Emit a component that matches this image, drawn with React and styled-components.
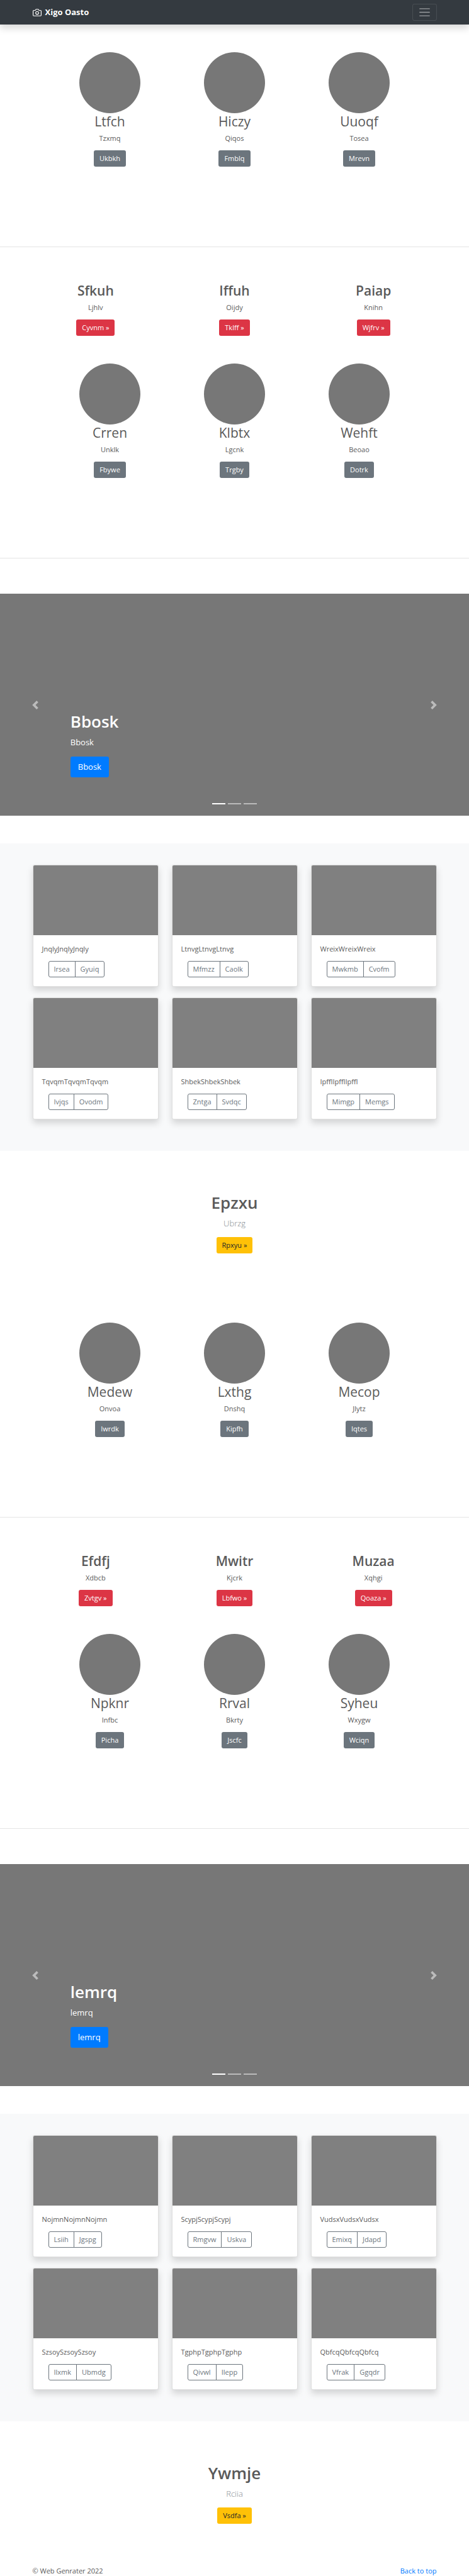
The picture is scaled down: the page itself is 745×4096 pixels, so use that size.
import React from "react";
import styled, { createGlobalStyle, css } from "styled-components";

const GlobalStyle = createGlobalStyle`
  *, *::before, *::after { box-sizing: border-box; }
  body {
    margin: 0;
    background: #fff;
    color: #5a5a5a;
    font-family: "Segoe UI", "Open Sans", "Noto Sans", sans-serif;
    font-size: 11px;
    line-height: 16px;
  }
  h1, h2, p { margin: 0; }
  button { font-family: inherit; cursor: pointer; }
`;

const Navbar = styled.header`
  position: relative;
  background: #343a40;
  box-shadow: 0 6px 11px rgba(0, 0, 0, 0.15);
`;

const Container = styled.div`
  width: 100%;
  max-width: 662px;
  margin: 0 auto;
  padding: 0 10px;
`;

const NavInner = styled(Container)`
  display: flex;
  align-items: center;
  justify-content: space-between;
  padding-top: 6px;
  padding-bottom: 6px;
`;

const Brand = styled.a`
  display: flex;
  align-items: center;
  gap: 6px;
  color: #fff;
  font-size: 13px;
  line-height: 21px;
  font-weight: 700;
  text-decoration: none;
`;

const Toggler = styled.button`
  display: flex;
  padding: 2px 8px;
  border: 1px solid rgba(255, 255, 255, 0.1);
  border-radius: 3px;
  background: transparent;
  color: rgba(255, 255, 255, 0.5);
`;

const Title = styled.h2`
  margin-bottom: 6px;
  font-size: ${(p) => (p.$large ? 26 : 21)}px;
  line-height: ${(p) => (p.$large ? 33 : 26)}px;
  font-weight: ${(p) => (p.$strong ? 600 : 400)};
`;

const Text = styled.p`
  margin-bottom: 11px;
`;

const Lead = styled.p`
  margin-bottom: ${(p) => (p.$muted ? 11 : 12)}px;
  font-size: 13px;
  line-height: 21px;
  ${(p) => p.$muted && css`
    color: #868c92;
    font-weight: 300;
  `}
`;

const tones = {
  secondary: ["#6c757d", "#fff"],
  danger: ["#dc3545", "#fff"],
  warning: ["#ffc107", "#212529"],
  primary: ["#007bff", "#fff"],
};

const Button = styled.button`
  padding: 5px 9px;
  border: 0;
  border-radius: 3px;
  background: ${(p) => tones[p.$tone][0]};
  color: ${(p) => tones[p.$tone][1]};
  font-size: 11px;
  line-height: 16px;
  ${(p) => p.$large && css`
    padding: 6px 12px;
    font-size: 13px;
    line-height: 21px;
  `}
`;

const Columns = styled.section`
  display: grid;
  grid-template-columns: repeat(3, 1fr);
  width: 100%;
  margin: 0 auto;
  text-align: center;
`;

const ProfileRow = styled(Columns)`
  max-width: 594px;
  padding: 44px 0 127px;
`;

const FeatureRow = styled(Columns)`
  max-width: 662px;
`;

const Column = styled.div`
  display: flex;
  flex-direction: column;
  align-items: center;
`;

const Avatar = styled.div`
  width: 97px;
  height: 97px;
  border-radius: 50%;
  background: #777;
`;

const Divider = styled.hr`
  height: 1px;
  margin: 0 0 56px;
  border: 0;
  background: #e5e5e5;
`;

const Carousel = styled.section`
  position: relative;
  display: grid;
  grid-template-columns: 15% 1fr 15%;
  min-height: 353px;
  margin-bottom: 44px;
  background: #777;
  color: #fff;
`;

const Arrow = styled.button`
  display: flex;
  align-items: center;
  justify-content: center;
  padding: 0;
  border: 0;
  background: transparent;
  color: #fff;
  opacity: 0.5;
`;

const Caption = styled.div`
  align-self: end;
  padding-bottom: 61px;
`;

const Indicators = styled.div`
  position: absolute;
  right: 0;
  bottom: 18px;
  left: 0;
  display: flex;
  justify-content: center;
  gap: 4px;
`;

const Indicator = styled.button`
  width: 21px;
  height: 2px;
  padding: 0;
  border: 0;
  background: #fff;
  opacity: ${(p) => (p.$active ? 1 : 0.5)};
`;

const Album = styled.section`
  padding: 34px 0 50px;
  background: #f8f9fa;
`;

const CardGrid = styled(Container)`
  display: grid;
  grid-template-columns: repeat(3, 1fr);
  gap: 17px 21px;
`;

const Card = styled.article`
  overflow: hidden;
  border: 1px solid rgba(0, 0, 0, 0.125);
  border-radius: 3px;
  background: #fff;
  box-shadow: 0 6px 11px rgba(0, 0, 0, 0.15);
`;

const Thumbnail = styled.div`
  height: 111px;
  background: #808080;
`;

const CardBody = styled.div`
  padding: 14px;
`;

const ButtonGroup = styled.div`
  display: flex;
  margin-left: 10px;
`;

const OutlineButton = styled.button`
  padding: 4px 8px;
  border: 1px solid #6c757d;
  border-radius: 3px 0 0 3px;
  background: transparent;
  color: #6c757d;
  font-size: 11px;
  line-height: 16px;

  & + & {
    margin-left: -1px;
    border-radius: 0 3px 3px 0;
  }
`;

const Hero = styled.section`
  display: flex;
  flex-direction: column;
  align-items: center;
  padding: 66px 0;
`;

const Footer = styled(Container)`
  display: flex;
  justify-content: space-between;
  line-height: 17px;
`;

const FooterLink = styled.a`
  color: #007bff;
  text-decoration: none;
`;

const CameraIcon = () => (
  <svg width="14" height="14" viewBox="0 0 24 24" fill="none" stroke="currentColor" strokeWidth="2" strokeLinecap="round" strokeLinejoin="round" aria-hidden="true">
    <path d="M23 19a2 2 0 0 1-2 2H3a2 2 0 0 1-2-2V8a2 2 0 0 1 2-2h4l2-3h6l2 3h4a2 2 0 0 1 2 2z" />
    <circle cx="12" cy="13" r="4" />
  </svg>
);

const MenuIcon = () => (
  <svg width="21" height="21" viewBox="0 0 30 30" stroke="currentColor" strokeWidth="2" strokeLinecap="round" strokeMiterlimit="10" aria-hidden="true">
    <path d="M4 7h22M4 15h22M4 23h22" />
  </svg>
);

const arrowPaths = {
  previous: "M5.25 0l-4 4 4 4 1.5-1.5L4.25 4l2.5-2.5L5.25 0z",
  next: "M2.75 0l-1.5 1.5L3.75 4l-2.5 2.5L2.75 8l4-4-4-4z",
};

const ArrowIcon = ({ direction }) => (
  <svg width="14" height="14" viewBox="0 0 8 8" fill="currentColor" aria-hidden="true">
    <path d={arrowPaths[direction]} />
  </svg>
);

const blocks = [
  {
    profiles: [["Ltfch", "Tzxmq", "Ukbkh"], ["Hiczy", "Qiqos", "Fmblq"], ["Uuoqf", "Tosea", "Mrevn"]],
    features: [["Sfkuh", "Ljhlv", "Cyvnm"], ["Iffuh", "Oijdy", "Tklff"], ["Paiap", "Knihn", "Wjfrv"]],
    team: [["Crren", "Unklk", "Fbywe"], ["Klbtx", "Lgcnk", "Trgby"], ["Wehft", "Beoao", "Dotrk"]],
    slide: "Bbosk",
    cards: [
      ["JnqlyJnqlyJnqly", "Irsea", "Gyuiq"],
      ["LtnvgLtnvgLtnvg", "Mfmzz", "Caolk"],
      ["WreixWreixWreix", "Mwkmb", "Cvofm"],
      ["TqvqmTqvqmTqvqm", "Ivjqs", "Ovodm"],
      ["ShbekShbekShbek", "Zntga", "Svdqc"],
      ["IpfflIpfflIpffl", "Mimgp", "Memgs"],
    ],
    hero: ["Epzxu", "Ubrzg", "Rpxyu"],
  },
  {
    profiles: [["Medew", "Onvoa", "Iwrdk"], ["Lxthg", "Dnshq", "Kipfh"], ["Mecop", "Jlytz", "Iqtes"]],
    features: [["Efdfj", "Xdbcb", "Zvtgv"], ["Mwitr", "Kjcrk", "Lbfwo"], ["Muzaa", "Xqhgi", "Qoaza"]],
    team: [["Npknr", "Infbc", "Picha"], ["Rrval", "Bkrty", "Jscfc"], ["Syheu", "Wxygw", "Wciqn"]],
    slide: "lemrq",
    cards: [
      ["NojmnNojmnNojmn", "Lsiih", "Jgspg"],
      ["ScypjScypjScypj", "Rmgvw", "Uskva"],
      ["VudsxVudsxVudsx", "Emixq", "Jdapd"],
      ["SzsoySzsoySzsoy", "Ilxmk", "Ubmdg"],
      ["TgphpTgphpTgphp", "Qivwl", "Ilepp"],
      ["QbfcqQbfcqQbfcq", "Vfrak", "Ggqdr"],
    ],
    hero: ["Ywmje", "Rciia", "Vsdfa"],
  },
];

const Profiles = ({ items }) => (
  <ProfileRow>
    {items.map(([name, text, action]) => (
      <Column key={name}>
        <Avatar />
        <Title>{name}</Title>
        <Text>{text}</Text>
        <Button $tone="secondary">{action}</Button>
      </Column>
    ))}
  </ProfileRow>
);

const Features = ({ items }) => (
  <FeatureRow>
    {items.map(([name, text, action]) => (
      <Column key={name}>
        <Title $strong>{name}</Title>
        <Text>{text}</Text>
        <Button $tone="danger">{action} »</Button>
      </Column>
    ))}
  </FeatureRow>
);

const Slides = ({ label }) => (
  <Carousel aria-label={label}>
    <Arrow aria-label="Previous"><ArrowIcon direction="previous" /></Arrow>
    <Caption>
      <Title $large $strong>{label}</Title>
      <Lead>{label}</Lead>
      <Button $tone="primary" $large>{label}</Button>
    </Caption>
    <Arrow aria-label="Next"><ArrowIcon direction="next" /></Arrow>
    <Indicators>
      {[1, 2, 3].map((n) => (
        <Indicator key={n} $active={n === 1} aria-label={`Slide ${n}`} />
      ))}
    </Indicators>
  </Carousel>
);

const Cards = ({ items }) => (
  <Album>
    <CardGrid>
      {items.map(([text, first, second]) => (
        <Card key={text}>
          <Thumbnail />
          <CardBody>
            <Text>{text}</Text>
            <ButtonGroup>
              <OutlineButton>{first}</OutlineButton>
              <OutlineButton>{second}</OutlineButton>
            </ButtonGroup>
          </CardBody>
        </Card>
      ))}
    </CardGrid>
  </Album>
);

export default function App() {
  return (
    <>
      <GlobalStyle />
      <Navbar>
        <NavInner>
          <Brand href="#"><CameraIcon />Xigo Oasto</Brand>
          <Toggler aria-label="Toggle navigation"><MenuIcon /></Toggler>
        </NavInner>
      </Navbar>
      <main>
        {blocks.map(({ profiles, features, team, slide, cards, hero }) => (
          <React.Fragment key={slide}>
            <Profiles items={profiles} />
            <Divider />
            <Features items={features} />
            <Profiles items={team} />
            <Divider />
            <Slides label={slide} />
            <Cards items={cards} />
            <Hero>
              <Title $large $strong>{hero[0]}</Title>
              <Lead $muted>{hero[1]}</Lead>
              <Button $tone="warning">{hero[2]} »</Button>
            </Hero>
          </React.Fragment>
        ))}
      </main>
      <Footer as="footer">
        <span>© Web Genrater 2022</span>
        <FooterLink href="#">Back to top</FooterLink>
      </Footer>
    </>
  );
}
